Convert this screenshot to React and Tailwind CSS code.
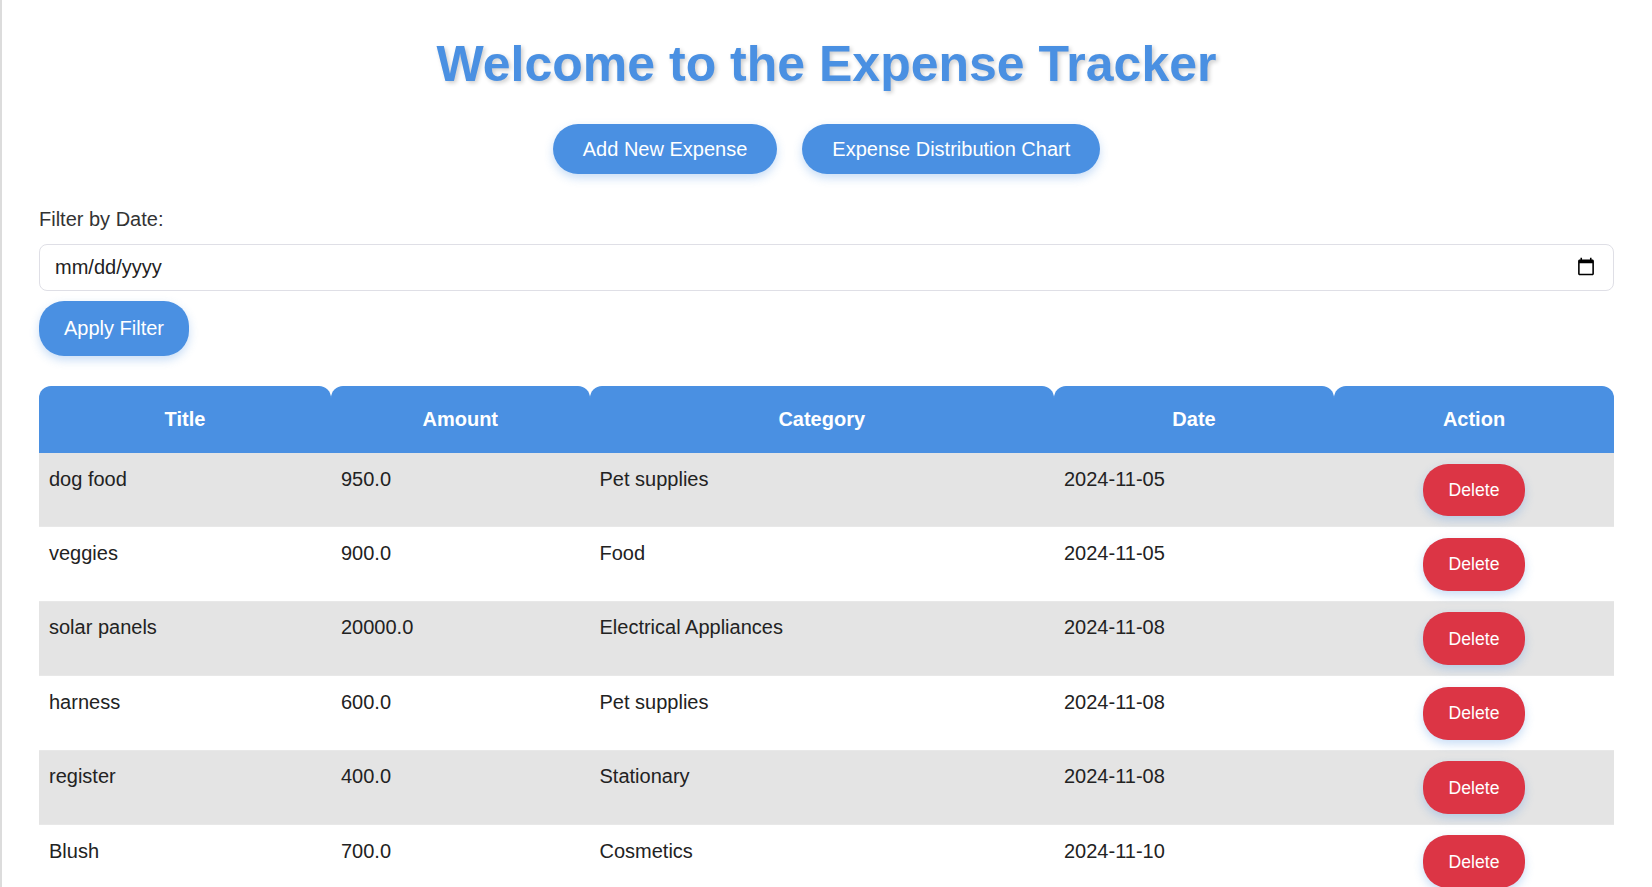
const expenses = [
  { title: 'dog food', amount: '950.0', category: 'Pet supplies', date: '2024-11-05' },
  { title: 'veggies', amount: '900.0', category: 'Food', date: '2024-11-05' },
  { title: 'solar panels', amount: '20000.0', category: 'Electrical Appliances', date: '2024-11-08' },
  { title: 'harness', amount: '600.0', category: 'Pet supplies', date: '2024-11-08' },
  { title: 'register', amount: '400.0', category: 'Stationary', date: '2024-11-08' },
  { title: 'Blush', amount: '700.0', category: 'Cosmetics', date: '2024-11-10' },
]

function Th({ children }) {
  return <th className="bg-[#4a90e2] text-white text-[20px] font-bold text-center rounded-t-[12px] py-[22px] px-[10px]">{children}</th>
}

function Td({ children }) {
  return <td className="align-top pt-[14.7px] pb-0 px-[10px] border-b border-[#e8e8e8]">{children}</td>
}

export default function App() {
  return (
    <div className="h-[887px] overflow-hidden bg-white border-l-2 border-[#dcdcdc] font-['Liberation_Sans',Arial,sans-serif] text-[20px] leading-[23px] text-[#333333]">
      <div className="pl-[37px] pr-[38px]">
        <h1 className="text-[50px] leading-[58px] font-bold text-center text-[#4a90e2] pt-[35px] [text-shadow:2px_2px_4px_rgba(0,0,0,0.2)]">
          Welcome to the Expense Tracker
        </h1>
        <div className="flex justify-center gap-[25px] mt-[31px]">
          <a href="#" className="bg-[#4a90e2] text-white rounded-[25px] px-[30px] py-[13.5px] shadow-[0_4px_10px_rgba(74,144,226,0.3)]">Add New Expense</a>
          <a href="#" className="bg-[#4a90e2] text-white rounded-[25px] px-[30px] py-[13.5px] shadow-[0_4px_10px_rgba(74,144,226,0.3)]">Expense Distribution Chart</a>
        </div>
        <label className="block mt-[34px]" htmlFor="filter-date">Filter by Date:</label>
        <input
          id="filter-date"
          type="date"
          className="block w-full h-[47px] mt-[13px] pl-[15px] pr-[15px] border border-[#dfdfe6] rounded-[8px] text-[20px] text-[#222222] bg-white [&::-webkit-datetime-edit-month-field]:p-0 [&::-webkit-datetime-edit-day-field]:p-0 [&::-webkit-datetime-edit-year-field]:p-0 [&::-webkit-datetime-edit]:p-0 [&::-webkit-calendar-picker-indicator]:mb-[2px]"
        />
        <button className="block mt-[10px] bg-[#4a90e2] text-white rounded-[25px] px-[25px] py-[16px] shadow-[0_4px_10px_rgba(74,144,226,0.3)]">Apply Filter</button>
        <table className="w-full table-fixed border-separate border-spacing-0 mt-[30px] text-[#222222]">
          <colgroup>
            <col className="w-[292px]" />
            <col className="w-[258.5px]" />
            <col className="w-[464.5px]" />
            <col className="w-[280px]" />
            <col className="w-[280px]" />
          </colgroup>
          <thead>
            <tr>
              <Th>Title</Th>
              <Th>Amount</Th>
              <Th>Category</Th>
              <Th>Date</Th>
              <Th>Action</Th>
            </tr>
          </thead>
          <tbody>
            {expenses.map((e, i) => (
              <tr key={e.title} className={i % 2 === 0 ? 'bg-[#e4e4e4]' : 'bg-white'}>
                <Td>{e.title}</Td>
                <Td>{e.amount}</Td>
                <Td>{e.category}</Td>
                <Td>{e.date}</Td>
                <td className="align-top text-center pt-[10.5px] pb-[10px] border-b border-[#e8e8e8]">
                  <button className="bg-[#dc3545] text-white text-[17.6px] rounded-[25px] px-[25.5px] pt-[1px] h-[52.9px] shadow-[0_4px_10px_rgba(74,144,226,0.3)]">Delete</button>
                </td>
              </tr>
            ))}
          </tbody>
        </table>
      </div>
    </div>
  )
}
